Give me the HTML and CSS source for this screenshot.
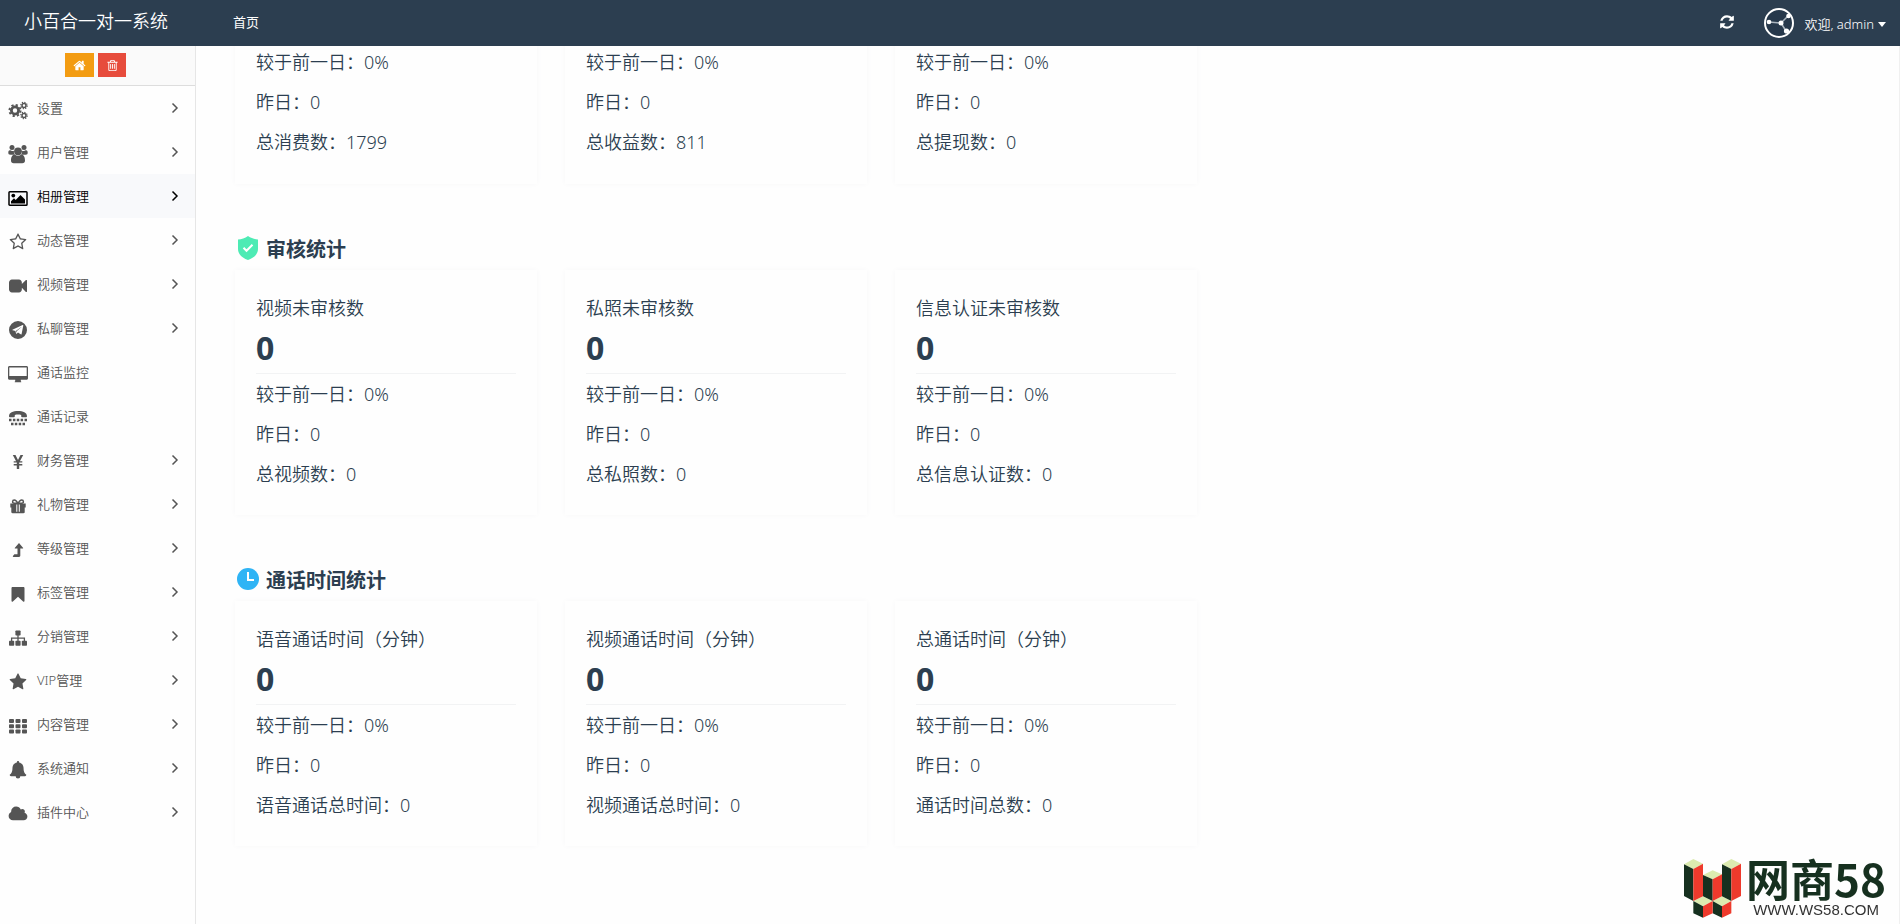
FILE: index.html
```html
<!DOCTYPE html>
<html lang="zh-CN">
<head>
<meta charset="utf-8">
<title>小百合一对一系统</title>
<link rel="stylesheet" href="styles.css">
</head>
<body>
<header class="navbar">
  <a class="brand" href="#">小百合一对一系统</a>
  <nav class="nav-links"><a href="#">首页</a></nav>
  <div class="nav-right">
    <button class="refresh" type="button" aria-label="刷新">
      <svg viewBox="0 0 1792 1792" width="16" height="16"><path d="M1639 1056q0 5-1 7-64 268-268 434.5t-478 166.5q-146 0-282.5-55t-243.5-157l-129 129q-19 19-45 19t-45-19-19-45v-448q0-26 19-45t45-19h448q26 0 45 19t19 45-19 45l-137 137q71 66 161 102t187 36q134 0 250-65t186-179q11-17 53-117 8-23 30-23h192q13 0 22.5 9.5t9.5 22.5zm25-800v448q0 26-19 45t-45 19h-448q-26 0-45-19t-19-45 19-45l138-138q-148-137-349-137-134 0-250 65t-186 179q-11 17-53 117-8 23-30 23h-199q-13 0-22.5-9.5t-9.5-22.5v-7q65-268 270-434.5t480-166.5q146 0 284 55.5t245 156.5l130-129q19-19 45-19t45 19 19 45z"/></svg>
    </button>
    <button class="user" type="button">
      <svg class="avatar" viewBox="0 0 30 30" width="30" height="30"><circle cx="15" cy="15" r="14" fill="#26384b" stroke="#fff" stroke-width="2"/><path d="M5 14l12 1 7-7M17 15l5 8" fill="none" stroke="#a9b4be" stroke-width="1.5"/><g fill="#fff"><circle cx="5" cy="14" r="2.3"/><circle cx="17" cy="15" r="2.5"/><circle cx="24.500" cy="8" r="2.3"/><circle cx="22.500" cy="23" r="2.6"/></g></svg>
      <span>欢迎, admin</span>
      <svg class="caret" viewBox="0 0 8 5" width="8" height="5"><path d="M0 0h8L4 5z"/></svg>
    </button>
  </div>
</header>
<div class="layout">
  <aside class="sidebar">
    <div class="shortcuts">
      <button class="shortcut shortcut-home" type="button" aria-label="主页"><svg viewBox="0 0 1792 1792" width="13" height="13"><path d="M1472 992v480q0 26-19 45t-45 19h-384v-384h-256v384h-384q-26 0-45-19t-19-45v-480q0-1 .5-3t.5-3l575-474 575 474q1 2 1 6zm223-69l-62 74q-8 9-21 11h-3q-13 0-21-7l-692-577-692 577q-12 8-24 7-13-2-21-11l-62-74q-8-10-7-23.500t11-21.500l719-599q32-26 76-26t76 26l244 204v-195q0-14 9-23t23-9h192q14 0 23 9t9 23v408l219 182q10 8 11 21.500t-7 23.500z"/></svg></button>
      <button class="shortcut shortcut-trash" type="button" aria-label="清除缓存"><svg viewBox="0 0 1792 1792" width="13" height="13"><path d="M704 736v576q0 14-9 23t-23 9h-64q-14 0-23-9t-9-23v-576q0-14 9-23t23-9h64q14 0 23 9t9 23zm256 0v576q0 14-9 23t-23 9h-64q-14 0-23-9t-9-23v-576q0-14 9-23t23-9h64q14 0 23 9t9 23zm256 0v576q0 14-9 23t-23 9h-64q-14 0-23-9t-9-23v-576q0-14 9-23t23-9h64q14 0 23 9t9 23zm128 724v-948h-896v948q0 22 7 40.5t14.5 27 10.500 8.500h832q3 0 10.500-8.500t14.500-27 7-40.500zm-672-1076h448l-48-117q-7-9-17-11h-317q-10 2-17 11zm928 32v64q0 14-9 23t-23 9h-96v948q0 83-47 143.500t-113 60.500h-832q-66 0-113-58.500t-47-141.500v-952h-96q-14 0-23-9t-9-23v-64q0-14 9-23t23-9h309l70-167q15-37 54-63t79-26h320q40 0 79 26t54 63l70 167h309q14 0 23 9t9 23z"/></svg></button>
    </div>
    <nav class="menu">
      <a class="item" href="#"><svg class="icon" viewBox="0 0 20 20"><g fill="none" stroke="currentColor"><circle cx="7" cy="10.500" r="3.600" stroke-width="2.800"/><circle cx="7" cy="10.500" r="5.600" stroke-width="1.900" stroke-dasharray="2.200 2.200"/><circle cx="16" cy="5.500" r="2" stroke-width="1.500"/><circle cx="16" cy="5.500" r="3.200" stroke-width="1.200" stroke-dasharray="1.250 1.250"/><circle cx="16" cy="15.500" r="2" stroke-width="1.500"/><circle cx="16" cy="15.500" r="3.200" stroke-width="1.200" stroke-dasharray="1.250 1.250"/></g></svg><span class="label">设置</span><svg class="arrow" viewBox="0 0 8 12"><path d="M1.500 1.500L6 6l-4.500 4.500"/></svg></a>
      <a class="item" href="#"><svg class="icon" viewBox="0 0 20 20"><circle cx="4" cy="3.500" r="2.500"/><circle cx="16" cy="3.500" r="2.500"/><path d="M3 6.500c1.200.8 2 .6 3 .3-.4 1.800.2 3.200 1 4H2.500C.8 10.800.3 10 .3 8.800c0-1.800.6-3.200 2.700-2.300zM17 6.500c-1.200.8-2 .6-3 .3.400 1.800-.2 3.200-1 4h4.500c1.700 0 2.200-.8 2.200-2 0-1.800-.6-3.200-2.700-2.300z"/><circle cx="10" cy="7.300" r="3.900"/><path d="M6.700 10.600c2.200 1.600 4.400 1.600 6.600 0 2.700 0 3.700 3.200 3.700 5.900 0 1.700-1 2.700-2.700 2.700H5.700C4 19.200 3 18.200 3 16.500c0-2.700 1-5.900 3.700-5.900z"/></svg><span class="label">用户管理</span><svg class="arrow" viewBox="0 0 8 12"><path d="M1.500 1.500L6 6l-4.500 4.500"/></svg></a>
      <a class="item active" href="#"><svg class="icon" viewBox="0 0 20 20"><rect x="1" y="3.700" width="18" height="13.600" rx=".8" fill="none" stroke="currentColor" stroke-width="1.500"/><circle cx="5.300" cy="7.600" r="1.900"/><path d="M3 15.500v-2.300l3-3 1.700 1.700L12.500 7l4.500 4.500v4z"/></svg><span class="label">相册管理</span><svg class="arrow" viewBox="0 0 8 12"><path d="M1.500 1.500L6 6l-4.500 4.500"/></svg></a>
      <a class="item" href="#"><svg class="icon" viewBox="0 0 1792 1792"><path fill-rule="evenodd" d="M1201 1004l306-297-422-62-189-382-189 382-422 62 306 297-73 421 378-199 377 199zM1728 647q0 22-26 48l-363 354 86 500q1 7 1 20 0 50-41 50-19 0-40-12l-449-236-449 236q-22 12-40 12-21 0-31.500-14.500t-10.500-35.500q0-6 2-20l86-500-364-354q-25-27-25-48 0-37 56-46l502-73 225-455q19-41 49-41t49 41l225 455 502 73q56 9 56 46z"/></svg><span class="label">动态管理</span><svg class="arrow" viewBox="0 0 8 12"><path d="M1.500 1.500L6 6l-4.500 4.500"/></svg></a>
      <a class="item" href="#"><svg class="icon" viewBox="0 0 1792 1792"><path d="M1792 352v1088q0 42-39 59-13 5-25 5-27 0-45-19l-403-403v166q0 119-84.500 203.500t-203.500 84.500h-704q-119 0-203.500-84.500t-84.500-203.500v-704q0-119 84.500-203.500t203.500-84.500h704q119 0 203.500 84.500t84.500 203.500v165l403-402q18-19 45-19 12 0 25 5 39 17 39 59z"/></svg><span class="label">视频管理</span><svg class="arrow" viewBox="0 0 8 12"><path d="M1.500 1.500L6 6l-4.500 4.500"/></svg></a>
      <a class="item" href="#"><svg class="icon" viewBox="0 0 20 20"><path fill-rule="evenodd" d="M10 1a9 9 0 100 18 9 9 0 000-18zM15.300 5.600l-1.700 8.300c-.1.600-.5.700-1 .4L10 12.400l-1.300 1.300c-.2.200-.5.100-.6-.2l-.7-2.400-2.600-.8c-.6-.2-.6-.6.100-.9l9.700-4.300c.5-.2.800 0 .7.500zM13.300 6.900l-5.500 4 .6 1.800.2-1.500 4.900-4.100z"/></svg><span class="label">私聊管理</span><svg class="arrow" viewBox="0 0 8 12"><path d="M1.500 1.500L6 6l-4.500 4.500"/></svg></a>
      <a class="item" href="#"><svg class="icon" viewBox="0 0 20 20"><path fill-rule="evenodd" d="M1.500 2h17c.9 0 1.500.6 1.500 1.500v10.700c0 .9-.6 1.500-1.500 1.500h-5.700v1.500c.6.400.7 1 0 1H7.200c-.7 0-.6-.6 0-1v-1.500H1.500c-.9 0-1.500-.6-1.500-1.500V3.500C0 2.600.6 2 1.500 2zM1.300 3.500v8.400h17.400V3.500z"/></svg><span class="label">通话监控</span></a>
      <a class="item" href="#"><svg class="icon" viewBox="0 0 20 20"><path d="M1 8.200C1 4.500 5 3 10 3s9 1.500 9 5.200c0 .8-.5 1.100-1.200 1.100h-3.300c-.8 0-1.300-.4-1.300-1.100V7c-1.800-.6-4.600-.6-6.400 0v1.200c0 .7-.5 1.100-1.300 1.100H2.200C1.500 9.300 1 9 1 8.200z"/><path d="M1 10.800h2.500v2.500H1zM4.900 10.800h2.500v2.500H4.900zM8.750 10.800h2.500v2.500h-2.500zM12.600 10.800h2.500v2.500h-2.500zM16.500 10.800H19v2.500h-2.500zM3 14.700h2.500v2.500H3zM6.800 14.700h2.500v2.500H6.800zM10.700 14.700h2.500v2.500h-2.500zM14.500 14.700H17v2.500h-2.500z"/></svg><span class="label">通话记录</span></a>
      <a class="item" href="#"><svg class="icon" viewBox="0 0 20 20"><path d="M4.800 3h2.700L10 8l2.500-5h2.700l-3.300 6.200h2.400v1.400h-3.100v1.500h3.100v1.400h-3.100V17H8.800v-3.500H5.700v-1.400h3.100v-1.500H5.700V9.200h2.400z"/></svg><span class="label">财务管理</span><svg class="arrow" viewBox="0 0 8 12"><path d="M1.500 1.500L6 6l-4.500 4.500"/></svg></a>
      <a class="item" href="#"><svg class="icon" viewBox="0 0 20 20"><path d="M2.300 7.500h15.400v4h-1V16c0 .8-.4 1.200-1.200 1.200h-11c-.8 0-1.200-.4-1.200-1.200v-4.500h-1z"/><path fill="#fff" d="M8.300 8.500h1v7.300h-1zM10.800 8.500h1v7.300h-1z"/><path fill="none" stroke="currentColor" stroke-width="1.500" d="M10 7.500C8.700 5 7.500 4 6.300 4c-2.200 0-2.300 3.300 0 3.300H10zM10 7.500C11.300 5 12.500 4 13.700 4c2.200 0 2.300 3.300 0 3.300H10z"/></svg><span class="label">礼物管理</span><svg class="arrow" viewBox="0 0 8 12"><path d="M1.500 1.500L6 6l-4.500 4.500"/></svg></a>
      <a class="item" href="#"><svg class="icon" viewBox="0 0 20 20"><path d="M11 3l4 4.700c.3.500.1.900-.5.900h-2.200v7c0 .9-.4 1.400-1.300 1.400H5.300L4.700 16.300l1.700-2H9.500V8.600H7.400c-.6 0-.8-.4-.5-.9z"/></svg><span class="label">等级管理</span><svg class="arrow" viewBox="0 0 8 12"><path d="M1.500 1.500L6 6l-4.500 4.500"/></svg></a>
      <a class="item" href="#"><svg class="icon" viewBox="0 0 20 20"><path d="M4.700 3h10.600c.8 0 1.200.4 1.200 1.200v12.600c0 1-.6 1.300-1.400.7L10 12.700l-5.100 4.800c-.8.600-1.400.3-1.400-.7V4.200C3.500 3.400 3.900 3 4.700 3z"/></svg><span class="label">标签管理</span><svg class="arrow" viewBox="0 0 8 12"><path d="M1.500 1.500L6 6l-4.500 4.500"/></svg></a>
      <a class="item" href="#"><svg class="icon" viewBox="0 0 20 20"><rect x="7.400" y="2.500" width="5.200" height="5" rx=".8"/><rect x="1" y="12.700" width="5.200" height="5" rx=".8"/><rect x="7.400" y="12.700" width="5.200" height="5" rx=".8"/><rect x="13.800" y="12.700" width="5.200" height="5" rx=".8"/><path fill="none" stroke="currentColor" stroke-width="1.300" d="M10 7v6M3.600 13v-2.800h12.800V13"/></svg><span class="label">分销管理</span><svg class="arrow" viewBox="0 0 8 12"><path d="M1.500 1.500L6 6l-4.500 4.500"/></svg></a>
      <a class="item" href="#"><svg class="icon" viewBox="0 0 1792 1792"><path d="M1728 647q0 22-26 48l-363 354 86 500q1 7 1 20 0 50-41 50-19 0-40-12l-449-236-449 236q-22 12-40 12-21 0-31.500-14.500t-10.500-35.500q0-6 2-20l86-500-364-354q-25-27-25-48 0-37 56-46l502-73 225-455q19-41 49-41t49 41l225 455 502 73q56 9 56 46z"/></svg><span class="label">VIP管理</span><svg class="arrow" viewBox="0 0 8 12"><path d="M1.500 1.500L6 6l-4.500 4.500"/></svg></a>
      <a class="item" href="#"><svg class="icon" viewBox="0 0 20 20"><g><rect x="1" y="3" width="5" height="4" rx=".9"/><rect x="7.500" y="3" width="5" height="4" rx=".9"/><rect x="14" y="3" width="5" height="4" rx=".9"/><rect x="1" y="8.200" width="5" height="4" rx=".9"/><rect x="7.500" y="8.200" width="5" height="4" rx=".9"/><rect x="14" y="8.200" width="5" height="4" rx=".9"/><rect x="1" y="13.400" width="5" height="4" rx=".9"/><rect x="7.500" y="13.400" width="5" height="4" rx=".9"/><rect x="14" y="13.400" width="5" height="4" rx=".9"/></g></svg><span class="label">内容管理</span><svg class="arrow" viewBox="0 0 8 12"><path d="M1.500 1.500L6 6l-4.500 4.500"/></svg></a>
      <a class="item" href="#"><svg class="icon" viewBox="0 0 20 20"><path d="M10 1c.7 0 1.200.5 1.100 1.400 2.700.6 4.400 2.600 4.400 5.200 0 4 1 6 2.800 7.200 0 .8-.5 1.400-1.300 1.400h-4.700a2.300 2.300 0 01-4.600 0H3c-.8 0-1.300-.6-1.300-1.400C3.500 13.600 4.500 11.600 4.500 7.600c0-2.600 1.700-4.600 4.400-5.200C8.800 1.500 9.300 1 10 1z"/></svg><span class="label">系统通知</span><svg class="arrow" viewBox="0 0 8 12"><path d="M1.500 1.500L6 6l-4.500 4.500"/></svg></a>
      <a class="item" href="#"><svg class="icon" viewBox="0 0 2048 1792"><path d="M1984 1152q0 159-112.500 271.500t-271.500 112.500h-1088q-185 0-316.500-131.500t-131.500-316.500q0-132 71-241.500t187-163.500q-2-28-2-43 0-212 150-362t362-150q158 0 286.500 88t187.500 230q70-62 166-62 106 0 181 75t75 181q0 75-41 138 129 30 213 134.500t84 239.500z"/></svg><span class="label">插件中心</span><svg class="arrow" viewBox="0 0 8 12"><path d="M1.500 1.500L6 6l-4.500 4.500"/></svg></a>
    </nav>
  </aside>
  <main class="content">
    <section class="stats">
      <div class="cards cards-scrolled">
        <article class="card"><p>较于前一日：0%</p><p>昨日：0</p><p>总消费数：1799</p></article>
        <article class="card"><p>较于前一日：0%</p><p>昨日：0</p><p>总收益数：811</p></article>
        <article class="card"><p>较于前一日：0%</p><p>昨日：0</p><p>总提现数：0</p></article>
      </div>
    </section>
    <section class="stats">
      <h2 class="heading"><svg viewBox="0 0 24 24" width="24" height="24"><path fill="#4debb4" d="M12 0c3 2.200 6.500 3.200 10 3.500V13c0 5.500-4.500 9-10 11C6.500 22 2 18.500 2 13V3.500C5.500 3.200 9 2.200 12 0z"/><path fill="none" stroke="#fff" stroke-width="2" d="M7.500 11.800l3 3 6-6"/></svg>审核统计</h2>
      <div class="cards">
        <article class="card"><h3>视频未审核数</h3><strong>0</strong><p>较于前一日：0%</p><p>昨日：0</p><p>总视频数：0</p></article>
        <article class="card"><h3>私照未审核数</h3><strong>0</strong><p>较于前一日：0%</p><p>昨日：0</p><p>总私照数：0</p></article>
        <article class="card"><h3>信息认证未审核数</h3><strong>0</strong><p>较于前一日：0%</p><p>昨日：0</p><p>总信息认证数：0</p></article>
      </div>
    </section>
    <section class="stats">
      <h2 class="heading"><svg viewBox="0 0 24 24" width="24" height="24"><circle cx="12" cy="12" r="11" fill="#2fb4f5"/><path fill="none" stroke="#fff" stroke-width="2" d="M12 5v8h6"/></svg>通话时间统计</h2>
      <div class="cards">
        <article class="card"><h3>语音通话时间（分钟）</h3><strong>0</strong><p>较于前一日：0%</p><p>昨日：0</p><p>语音通话总时间：0</p></article>
        <article class="card"><h3>视频通话时间（分钟）</h3><strong>0</strong><p>较于前一日：0%</p><p>昨日：0</p><p>视频通话总时间：0</p></article>
        <article class="card"><h3>总通话时间（分钟）</h3><strong>0</strong><p>较于前一日：0%</p><p>昨日：0</p><p>通话时间总数：0</p></article>
      </div>
    </section>
  </main>
</div>
<div class="watermark">
  <svg viewBox="74 54 171 177" width="57" height="59">
    <g fill="#dcebb0"><path d="M74 70l28-16 29 14-29 16zM188 70l28-16 29 14-29 16zM131 102l29-14 28 12-28 15zM102 180l29-14 29 14-29 16zM160 180l28-14 28 14-28 16z"/></g>
    <g fill="#16301f"><path d="M74 70l28 14v96l-28-15zM188 70l28 14v96l-28-14zM131 102l29 13v65l-29-14zM102 180l29 16v34l-29-13zM160 180l28 16v34l-28-13z"/></g>
    <g fill="#ee3a2c"><path d="M102 84l29-16v98l-29 14zM216 84l29-16v97l-29 15zM160 115l28-15v66l-28 14zM131 196l29-16v37l-29 13zM188 196l28-16v37l-28 13z"/></g>
  </svg>
  <div class="watermark-text"><span class="watermark-name">网商58</span><span class="watermark-url">WWW.WS58.COM</span></div>
</div>
</body>
</html>
```
FILE: styles.css
```css
* { box-sizing: border-box; }
body {
  margin: 0;
  height: 100vh;
  display: flex;
  flex-direction: column;
  overflow: hidden;
  background: #fefefe;
  color: #2c3e50;
  font-family: "Noto Sans", "Noto Sans CJK SC", sans-serif;
  font-size: 13px;
}
a { color: inherit; text-decoration: none; }
button { border: 0; padding: 0; background: none; color: inherit; font: inherit; cursor: pointer; }
svg { display: block; flex: none; fill: currentColor; }

.navbar {
  flex: none;
  display: flex;
  align-items: center;
  height: 46px;
  padding: 0 14px 0 24px;
  background: #2c3e50;
  color: #fff;
}
.brand { width: 209px; font-size: 18px; line-height: 26px; font-weight: 350; padding-bottom: 4px; }
.nav-links { padding-bottom: 4px; }
.nav-right { display: flex; align-items: center; gap: 29px; margin-left: auto; }
.refresh { padding-bottom: 2px; }
.user { display: flex; align-items: center; font-weight: 350; }
.avatar { margin-right: 11px; }
.caret { margin: 2px 0 0 4px; }

.layout { flex: 1; min-height: 0; display: flex; }
.sidebar { flex: none; width: 196px; border-right: 1px solid #e6e6e6; color: #555; }
.shortcuts {
  display: flex;
  justify-content: center;
  align-items: flex-start;
  gap: 4px;
  height: 40px;
  padding: 7px 4px 0 0;
  background: #fafafa;
  border-bottom: 1px solid #ddd;
}
.shortcut { display: grid; place-items: center; width: 28px; height: 24px; color: #fff; }
.shortcut-home { width: 29px; background: #f39c12; }
.shortcut-trash { background: #e74c3c; }

.item { display: flex; align-items: center; height: 44px; padding: 0 16px 0 8px; font-weight: 350; }
.item.active { background: #f8f9fb; color: #000; }
.icon { width: 20px; height: 20px; margin: 3px 9px 0 0; }
.icon[viewBox="0 0 1792 1792"] { width: 18px; height: 18px; margin: 3px 10px 0 1px; }
.label { flex: 1; padding-bottom: 2px; }
.arrow { width: 8px; height: 12px; fill: none; stroke: currentColor; stroke-width: 1.5; }

.content { flex: 1; min-width: 0; overflow: hidden; padding-left: 39px; border-right: 1px solid #f0f0f0; }
.stats { margin-bottom: 44px; }
.heading {
  display: flex;
  align-items: center;
  gap: 6px;
  height: 42px;
  margin: 0;
  padding: 0 0 2px 1px;
  font-size: 20px;
  font-weight: 700;
}
.cards { display: flex; gap: 28px; }
.card {
  width: 302px;
  padding: 18px 21px 21px;
  box-shadow: 0 0 6px #f8f8f9;
  font-size: 18px;
  line-height: 40px;
  font-weight: 350;
}
.card h3 { margin: 0; font-size: 18px; font-weight: 350; }
.card strong {
  display: block;
  padding-bottom: 5px;
  border-bottom: 1px solid #f2f3f4;
  font-size: 32px;
  line-height: 40px;
  font-weight: 700;
}
.card p { margin: 0; }
.cards-scrolled { margin-top: -4px; }
.cards-scrolled .card { padding-top: 0; padding-bottom: 22px; }

.watermark { position: fixed; right: 14px; bottom: 4px; display: flex; align-items: center; gap: 5px; color: #16301f; }
.watermark-text { display: flex; flex-direction: column; align-items: center; }
.watermark-name { font: 700 44px/44px "Noto Sans CJK SC", sans-serif; }
.watermark-url { font: 15px/20px "Liberation Sans", sans-serif; color: #333; }
```
